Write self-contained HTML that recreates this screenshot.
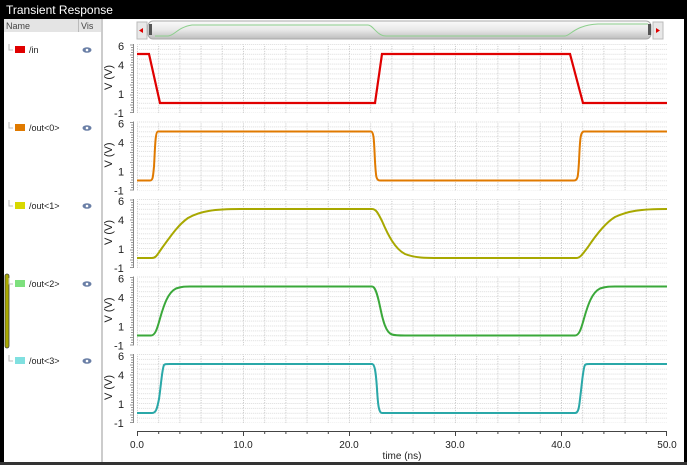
<!DOCTYPE html>
<html><head><style>
html,body{margin:0;padding:0;width:687px;height:465px;overflow:hidden;background:#fff;font-family:"Liberation Sans",sans-serif}
</style></head><body>
<svg width="687" height="465" xmlns="http://www.w3.org/2000/svg" font-family="Liberation Sans, sans-serif">
<defs>
<pattern id="g" x="137" y="0" width="21.2" height="4.9" patternUnits="userSpaceOnUse">
<line x1="0.5" y1="0" x2="0.5" y2="4.9" stroke="#c8c8c8" stroke-width="1" stroke-dasharray="1,1"/>
<line x1="0" y1="0.5" x2="21.2" y2="0.5" stroke="#dcdcdc" stroke-width="1" stroke-dasharray="1,1"/>
</pattern>
<linearGradient id="sb" x1="0" y1="0" x2="0" y2="1"><stop offset="0" stop-color="#fafafa"/><stop offset="0.5" stop-color="#e8e8e8"/><stop offset="1" stop-color="#bdbdbd"/></linearGradient>
<g id="ruler">
<line x1="133.5" y1="0" x2="133.5" y2="69" stroke="#888"/>
<path d="M130 1h3M131 3.5h2M131 6h2M131 8.5h2M130 11h3M131 13.5h2M131 16h2M131 18.5h2M130 21h3M131 23.5h2M131 26h2M131 28.5h2M130 31h3M131 33.5h2M131 36h2M131 38.5h2M130 41h3M131 43.5h2M131 46h2M131 48.5h2M130 51h3M131 53.5h2M131 56h2M131 58.5h2M130 61h3M131 63.5h2M131 66h2M130 68.5h3" stroke="#999" stroke-width="1"/>
<rect x="137" y="0" width="530" height="69" fill="url(#g)"/>
<text x="118" y="6" font-size="11" fill="#222">6</text>
<text x="118" y="25" font-size="11" fill="#222">4</text>
<text x="118" y="54" font-size="11" fill="#222">1</text>
<text x="114" y="73" font-size="11" fill="#222">-1</text>
<text transform="translate(112,46) rotate(-90)" font-size="11" fill="#222">V (V)</text>
</g>
</defs>
<rect x="0" y="0" width="687" height="465" fill="#000"/>
<text x="6" y="14" font-size="12" fill="#fff">Transient Response</text>
<rect x="4" y="19" width="680" height="443" fill="#fff"/>
<rect x="4" y="19" width="97" height="13" fill="#e4e4e4"/>
<line x1="78.5" y1="19" x2="78.5" y2="32" stroke="#bbb"/>
<text x="6" y="29" font-size="9" fill="#444">Name</text>
<text x="81" y="29" font-size="9" fill="#444">Vis</text>
<rect x="101" y="19" width="2" height="443" fill="#ccc"/>
<rect x="5" y="274" width="4" height="74" rx="2" fill="#a8a800" stroke="#444" stroke-width="0.8"/>
<g font-size="9" fill="#222">
<g transform="translate(0,50)"><path d="M9 -6v6h4" stroke="#bbb" fill="none"/><rect x="15" y="-4" width="10" height="7" fill="#e00000"/><text x="29" y="3">/in</text><ellipse cx="87" cy="0" rx="4.5" ry="2.8" fill="#6a7fa6"/><circle cx="87" cy="0" r="1.3" fill="#fff"/></g>
<g transform="translate(0,128)"><path d="M9 -6v6h4" stroke="#bbb" fill="none"/><rect x="15" y="-4" width="10" height="7" fill="#e07a00"/><text x="29" y="3">/out&lt;0&gt;</text><ellipse cx="87" cy="0" rx="4.5" ry="2.8" fill="#6a7fa6"/><circle cx="87" cy="0" r="1.3" fill="#fff"/></g>
<g transform="translate(0,206)"><path d="M9 -6v6h4" stroke="#bbb" fill="none"/><rect x="15" y="-4" width="10" height="7" fill="#d8d800"/><text x="29" y="3">/out&lt;1&gt;</text><ellipse cx="87" cy="0" rx="4.5" ry="2.8" fill="#6a7fa6"/><circle cx="87" cy="0" r="1.3" fill="#fff"/></g>
<g transform="translate(0,284)"><path d="M9 -6v6h4" stroke="#bbb" fill="none"/><rect x="15" y="-4" width="10" height="7" fill="#7ee07e"/><text x="29" y="3">/out&lt;2&gt;</text><ellipse cx="87" cy="0" rx="4.5" ry="2.8" fill="#6a7fa6"/><circle cx="87" cy="0" r="1.3" fill="#fff"/></g>
<g transform="translate(0,361)"><path d="M9 -6v6h4" stroke="#bbb" fill="none"/><rect x="15" y="-4" width="10" height="7" fill="#80e0e0"/><text x="29" y="3">/out&lt;3&gt;</text><ellipse cx="87" cy="0" rx="4.5" ry="2.8" fill="#6a7fa6"/><circle cx="87" cy="0" r="1.3" fill="#fff"/></g>
</g>
<!-- scrollbar -->
<rect x="137" y="22" width="10" height="17" fill="#e8e8e8" stroke="#bbb"/>
<path d="M139 30.5l4 -2.5v5z" fill="#e00000"/>
<rect x="148" y="21" width="503" height="18" rx="5" fill="url(#sb)" stroke="#aaa"/>
<rect x="149" y="24" width="3" height="11" fill="#555"/>
<rect x="648" y="24" width="3" height="11" fill="#555"/>
<rect x="653" y="22" width="10" height="17" fill="#e8e8e8" stroke="#bbb"/>
<path d="M660 30.5l-4 -2.5v5z" fill="#e00000"/>
<path d="M155 36H168C174 36 178 27 192 25H368C373 25 377 36 386 36H565C570 36 575 25 598 24H648" fill="none" stroke="#8ccf8c" stroke-width="1"/>
<!-- panels -->
<g transform="translate(0,44)"><use href="#ruler"/>
<path d="M137 10H149L160 59H375L382 10H570L583 59H667" fill="none" stroke="#e00000" stroke-width="2.2"/></g>
<g transform="translate(0,121.5)"><use href="#ruler"/>
<path d="M137 59H150C153 59 153 55 154 45C155 30 155 10 158 10H371C374 10 374 20 375 40C376 55 376 59 380 59H574C578 59 578 55 579 40C580 20 580 10 584 10H667" fill="none" stroke="#e07a00" stroke-width="2"/></g>
<g transform="translate(0,199)"><use href="#ruler"/>
<path d="M137 59H152C156 59 157 56 162 49C170 38 178 26 188 19C200 12 215 10 240 10H372C376 10 378 14 382 22C388 36 395 50 405 55C415 59 425 59 440 59H576C580 59 582 56 588 48C596 36 605 24 615 18C628 12 640 10 667 10" fill="none" stroke="#a8a800" stroke-width="2"/></g>
<g transform="translate(0,276.5)"><use href="#ruler"/>
<path d="M137 59H151C155 59 157 53 160 42C164 28 168 16 176 12C182 10 185 10 190 10H372C375 10 377 16 380 30C383 45 386 56 392 58C395 59 398 59 405 59H575C579 59 581 53 584 42C588 28 592 16 600 12C606 10 610 10 615 10H667" fill="none" stroke="#3aa83a" stroke-width="2"/></g>
<g transform="translate(0,354)"><use href="#ruler"/>
<path d="M137 59H152C156 59 157 55 159 45C161 32 162 15 164 11C165 10 166 10 170 10H372C375 10 376 20 377 35C378 52 379 59 382 59H575C578 59 579 55 580 45C582 30 583 14 585 11C586 10 587 10 590 10H667" fill="none" stroke="#2aa8a8" stroke-width="2"/></g>
<!-- x axis -->
<line x1="137" y1="431.5" x2="667" y2="431.5" stroke="#444"/>
<path d="M137.5 431v5M158.7 431v3M179.9 431v3M201.1 431v3M222.3 431v3M243.5 431v5M264.7 431v3M285.9 431v3M307.1 431v3M328.3 431v3M349.5 431v5M370.7 431v3M391.9 431v3M413.1 431v3M434.3 431v3M455.5 431v5M476.7 431v3M497.9 431v3M519.1 431v3M540.3 431v3M561.5 431v5M582.7 431v3M603.9 431v3M625.1 431v3M646.3 431v3M666.5 431v5" stroke="#444"/>
<g font-size="10" fill="#222" text-anchor="middle">
<text x="137" y="448">0.0</text><text x="243" y="448">10.0</text><text x="349" y="448">20.0</text><text x="455" y="448">30.0</text><text x="561" y="448">40.0</text><text x="667" y="448">50.0</text>
<text x="402" y="459">time (ns)</text></g>
<rect x="0" y="462" width="687" height="3" fill="#333"/>
</svg>
</body></html>
